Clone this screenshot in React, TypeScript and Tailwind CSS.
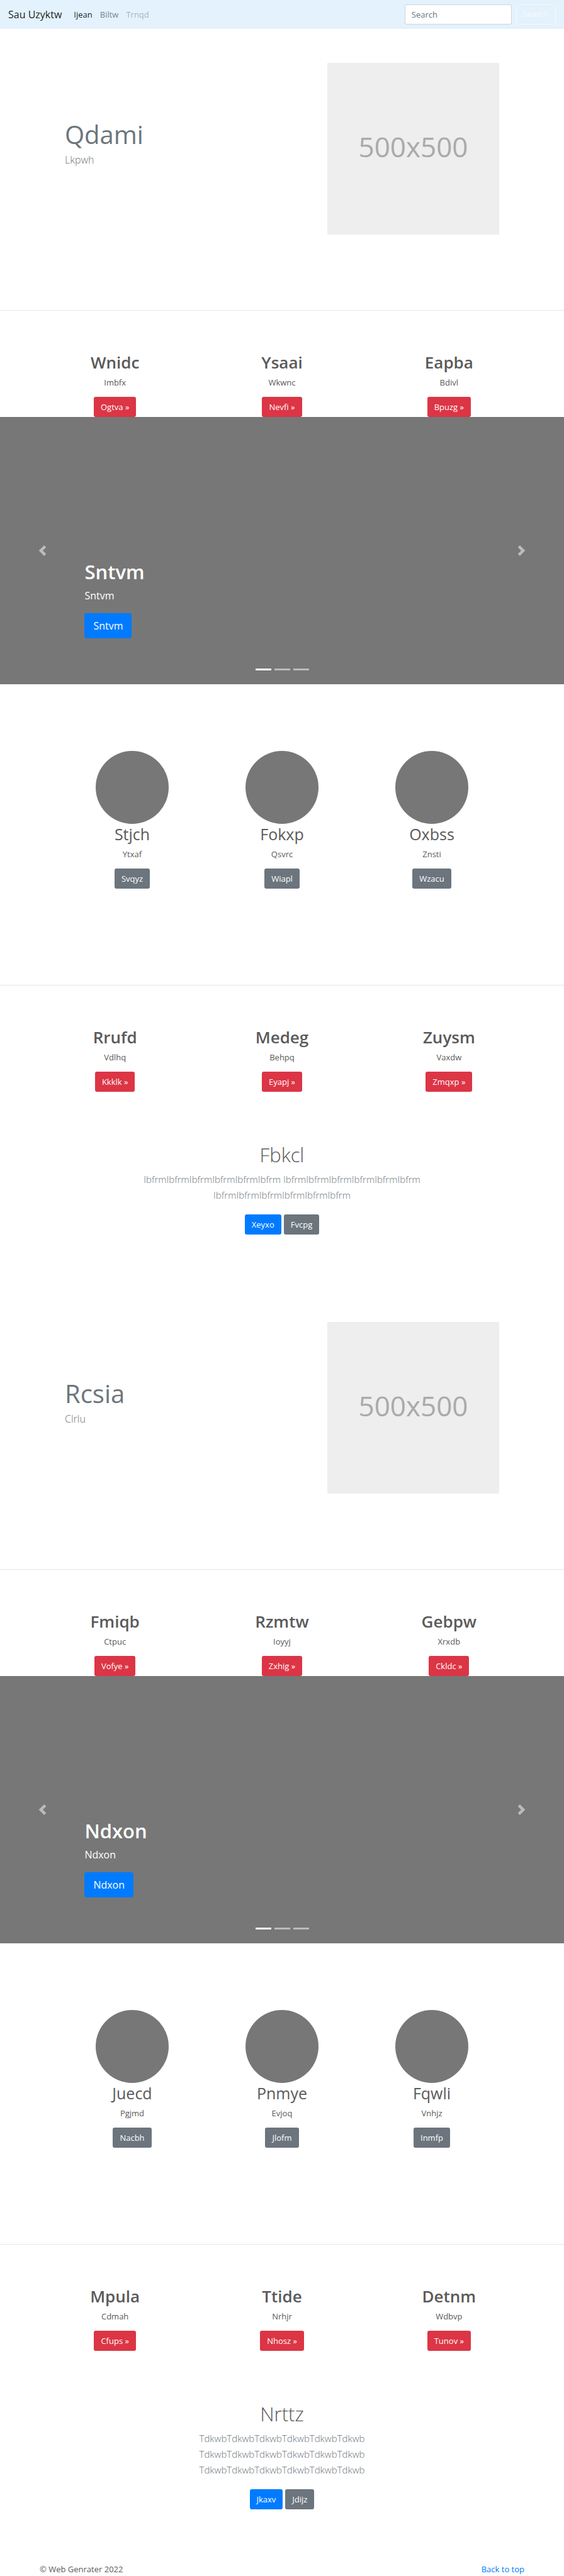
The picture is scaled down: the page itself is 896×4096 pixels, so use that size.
import type { ReactNode } from "react";

type Item = { title: string; text: string; action: string };

type BlockData = {
  hero: { title: string; text: string };
  top: Item[];
  slide: string;
  people: Item[];
  bottom: Item[];
  album: { title: string; text: string; primary: string; secondary: string };
};

const blocks: BlockData[] = [
  {
    hero: { title: "Qdami", text: "Lkpwh" },
    top: [
      { title: "Wnidc", text: "Imbfx", action: "Ogtva »" },
      { title: "Ysaai", text: "Wkwnc", action: "Nevfi »" },
      { title: "Eapba", text: "Bdivl", action: "Bpuzg »" },
    ],
    slide: "Sntvm",
    people: [
      { title: "Stjch", text: "Ytxaf", action: "Svqyz" },
      { title: "Fokxp", text: "Qsvrc", action: "Wiapl" },
      { title: "Oxbss", text: "Znsti", action: "Wzacu" },
    ],
    bottom: [
      { title: "Rrufd", text: "Vdlhq", action: "Kkklk »" },
      { title: "Medeg", text: "Behpq", action: "Eyapj »" },
      { title: "Zuysm", text: "Vaxdw", action: "Zmqxp »" },
    ],
    album: {
      title: "Fbkcl",
      text: "IbfrmIbfrmIbfrmIbfrmIbfrmIbfrm IbfrmIbfrmIbfrmIbfrmIbfrmIbfrm IbfrmIbfrmIbfrmIbfrmIbfrmIbfrm",
      primary: "Xeyxo",
      secondary: "Fvcpg",
    },
  },
  {
    hero: { title: "Rcsia", text: "Clrlu" },
    top: [
      { title: "Fmiqb", text: "Ctpuc", action: "Vofye »" },
      { title: "Rzmtw", text: "Ioyyj", action: "Zxhig »" },
      { title: "Gebpw", text: "Xrxdb", action: "Ckldc »" },
    ],
    slide: "Ndxon",
    people: [
      { title: "Juecd", text: "Pgjmd", action: "Nacbh" },
      { title: "Pnmye", text: "Evjoq", action: "Jlofm" },
      { title: "Fqwli", text: "Vnhjz", action: "Inmfp" },
    ],
    bottom: [
      { title: "Mpula", text: "Cdmah", action: "Cfups »" },
      { title: "Ttide", text: "Nrhjr", action: "Nhosz »" },
      { title: "Detnm", text: "Wdbvp", action: "Tunov »" },
    ],
    album: {
      title: "Nrttz",
      text: "TdkwbTdkwbTdkwbTdkwbTdkwbTdkwb TdkwbTdkwbTdkwbTdkwbTdkwbTdkwb TdkwbTdkwbTdkwbTdkwbTdkwbTdkwb",
      primary: "Jkaxv",
      secondary: "Jdijz",
    },
  },
];

const tones = {
  danger: "bg-[#dc3545]",
  primary: "bg-[#007bff]",
  secondary: "bg-[#6c757d]",
};

function Button({ tone, children }: { tone: keyof typeof tones; children: ReactNode }) {
  return (
    <button type="button" className={`h-8 rounded-[3px] px-[11px] text-[13px] leading-5 text-white ${tones[tone]}`}>
      {children}
    </button>
  );
}

function Navbar() {
  return (
    <nav className="flex items-center justify-between bg-[#e3f2fd] px-[13px] py-[7px]">
      <div className="flex items-center">
        <a href="#" className="mr-[13px] text-[16px] leading-[25px] text-black/90">Sau Uzyktw</a>
        <ul className="flex text-[13px] leading-5">
          <li><a href="#" className="block px-[6px] text-black/90">Ijean</a></li>
          <li><a href="#" className="block px-[6px] text-black/50">Biltw</a></li>
          <li><a href="#" aria-disabled="true" className="block px-[6px] text-black/30">Trnqd</a></li>
        </ul>
      </div>
      <form className="flex gap-[7px]" onSubmit={(e) => e.preventDefault()}>
        <input
          type="search"
          aria-label="Search"
          placeholder="Search"
          className="h-8 w-[170px] rounded-[3px] border border-[#ced4da] bg-white px-[10px] text-[13px] text-[#495057] placeholder:text-[#6c757d]"
        />
        <button type="submit" className="h-8 rounded-[3px] border border-[#f8f9fa] px-[10px] text-[13px] text-[#f8f9fa]">
          Search
        </button>
      </form>
    </nav>
  );
}

function Hero({ title, text }: { title: string; text: string }) {
  return (
    <section className="border-b border-[#e5e5e5] px-4 pt-[54px] pb-[120px]">
      <div className="mx-auto flex max-w-[690px] justify-between">
        <div className="pt-[93px] text-[#6c757d]">
          <h1 className="mb-[7px] text-[40px] leading-[42px]">{title}</h1>
          <p className="text-[16px] leading-[25px] font-light">{text}</p>
        </div>
        <div className="flex size-[273px] items-center justify-center bg-[#eeeeee] pb-2 text-[44px] text-[#aaaaaa]">
          500x500
        </div>
      </div>
    </section>
  );
}

function Columns({ items }: { items: Item[] }) {
  return (
    <section className="mx-auto grid max-w-[796px] grid-cols-3 pt-[66px] text-center">
      {items.map((item) => (
        <div key={item.title}>
          <h2 className="mb-[6px] text-[26px] leading-8 font-semibold">{item.title}</h2>
          <p className="mb-[13px] text-[13px] leading-5">{item.text}</p>
          <div className="flex justify-center">
            <Button tone="danger">{item.action}</Button>
          </div>
        </div>
      ))}
    </section>
  );
}

function Carousel({ label }: { label: string }) {
  return (
    <section className="relative flex h-[425px] flex-col items-start justify-end bg-[#777777] px-[15%] pb-[73px] text-white">
      <h2 className="mb-[6px] text-[31px] leading-10 font-semibold">{label}</h2>
      <p className="mb-[15px] text-[16px] leading-[25px]">{label}</p>
      <button type="button" className="h-10 rounded-[4px] bg-[#007bff] px-[14px] text-[16px] leading-[25px]">
        {label}
      </button>
      <button type="button" aria-label="Previous" className="absolute inset-y-0 left-0 flex w-[15%] items-center justify-center opacity-50">
        <svg viewBox="0 0 8 8" className="size-[17px]" fill="#fff">
          <path d="M5.25 0l-4 4 4 4 1.5-1.5L4.25 4l2.5-2.5L5.25 0z" />
        </svg>
      </button>
      <button type="button" aria-label="Next" className="absolute inset-y-0 right-0 flex w-[15%] items-center justify-center opacity-50">
        <svg viewBox="0 0 8 8" className="size-[17px]" fill="#fff">
          <path d="M2.75 0l-1.5 1.5L3.75 4l-2.5 2.5L2.75 8l4-4-4-4z" />
        </svg>
      </button>
      <div className="absolute inset-x-0 bottom-[22px] flex justify-center gap-[5px]">
        <span className="h-[3px] w-[25px] bg-white" />
        <span className="h-[3px] w-[25px] bg-white/50" />
        <span className="h-[3px] w-[25px] bg-white/50" />
      </div>
    </section>
  );
}

function People({ items }: { items: Item[] }) {
  return (
    <section className="border-b border-[#e5e5e5] pt-[106px] pb-[153px] text-center">
      <div className="mx-auto grid max-w-[714px] grid-cols-3">
        {items.map((item) => (
          <div key={item.title} className="flex flex-col items-center">
            <div className="size-[116px] rounded-full bg-[#777777]" />
            <h2 className="mb-[6px] text-[25px] leading-8">{item.title}</h2>
            <p className="mb-[13px] text-[13px] leading-5">{item.text}</p>
            <Button tone="secondary">{item.action}</Button>
          </div>
        ))}
      </div>
    </section>
  );
}

function Album({ title, text, primary, secondary }: BlockData["album"]) {
  return (
    <section className="mx-auto max-w-[506px] pt-20 pb-[85px] text-center">
      <h2 className="mb-[7px] text-[31px] leading-10 font-light">{title}</h2>
      <p className="mb-[18px] text-[15px] leading-[25px] font-light text-[#6c757d]">{text}</p>
      <div className="flex justify-center gap-1">
        <Button tone="primary">{primary}</Button>
        <Button tone="secondary">{secondary}</Button>
      </div>
    </section>
  );
}

export default function App() {
  return (
    <div className="bg-white font-['Open_Sans','Noto_Sans',sans-serif] text-[#5a5a5a]">
      <Navbar />
      <main>
        {blocks.map((block) => (
          <div key={block.hero.title}>
            <Hero {...block.hero} />
            <Columns items={block.top} />
            <Carousel label={block.slide} />
            <People items={block.people} />
            <Columns items={block.bottom} />
            <Album {...block.album} />
          </div>
        ))}
      </main>
      <footer className="mx-auto flex max-w-[796px] justify-between px-[13px] text-[13px] leading-[21px]">
        <p>© Web Genrater 2022</p>
        <a href="#" className="text-[#007bff]">Back to top</a>
      </footer>
    </div>
  );
}
